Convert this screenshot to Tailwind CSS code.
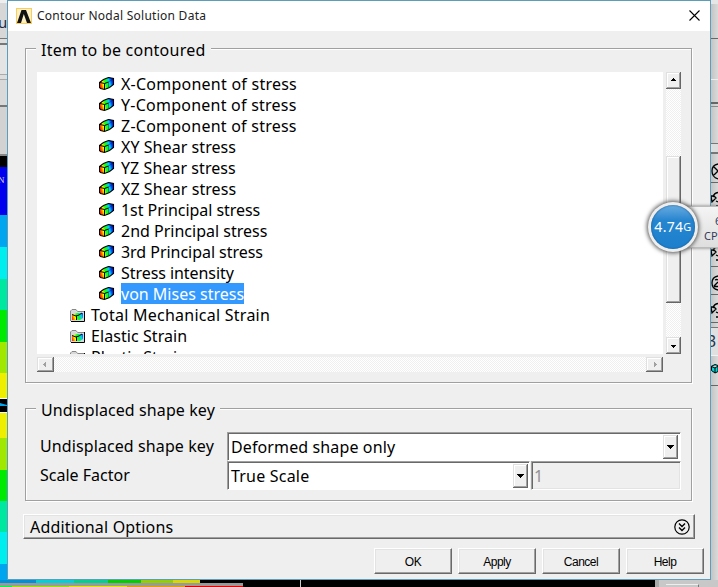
<!DOCTYPE html>
<html lang="en">
<head>
<meta charset="utf-8">
<title>Contour Nodal Solution Data</title>
<script src="https://cdn.jsdelivr.net/npm/@tailwindcss/browser@4"></script>
</head>
<body class="relative w-[718px] h-[587px] overflow-hidden bg-[#d6d6d6] font-['Noto_Sans','Open_Sans',sans-serif] text-[16px] text-black">
<svg width="0" height="0" class="absolute">
  <defs>
    <linearGradient id="rain" gradientUnits="userSpaceOnUse" x1="0" y1="9" x2="15" y2="4">
      <stop offset="0" stop-color="#f00"/><stop offset=".14" stop-color="#ff5000"/><stop offset=".3" stop-color="#ff0"/><stop offset=".42" stop-color="#3f0"/><stop offset=".58" stop-color="#00f060"/><stop offset=".7" stop-color="#0cf"/><stop offset=".84" stop-color="#04f"/><stop offset="1" stop-color="#00c"/>
    </linearGradient>
    <symbol id="cube" viewBox="0 0 16 14">
      <path d="M.5 5.500L4.500 2.500 9.500.5 14.500 1.500V7.500L10.500 10.500 5.500 12.500 1.500 11.500.5 10.500Z" fill="url(#rain)" stroke="#000" stroke-width="1.100"/>
      <path d="M1 5.500L5.500 6.500 9.500 5M5.500 6.500V12" fill="none" stroke="#000"/>
      <path d="M9.500 5L14 2M9.500 5V10" fill="none" stroke="#000" stroke-opacity=".35"/>
    </symbol>
    <symbol id="folder" viewBox="0 0 16 14">
      <path d="M1 13V3l1-1h4l1 2h8v9z" fill="#d8d8d8"/>
      <path d="M.5 13V3L2 1.500h4L7.500 3.500H14" fill="none" stroke="#888"/>
      <path d="M14.500 3v10.500H1" fill="none" stroke="#000"/>
      <path d="M2 7l5-2h6v5l-3 2H2z" fill="url(#rain)"/>
      <path d="M2 6.500l4 1.500 3-1 3-2M6.500 8v4" fill="none" stroke="#000"/>
    </symbol>
    <pattern id="dither" width="2" height="2" patternUnits="userSpaceOnUse"><rect width="2" height="2" fill="#fff"/><path d="M0 0h1v1H0zM1 1h1v1H1z" fill="#efefef"/></pattern>
    <symbol id="arc" viewBox="0 0 7 18"><path d="M7 2.500Q3 3 2 7M0 6h3l2 2-4 4zM5 11l2 1M5 16h2" fill="none" stroke="#000" stroke-width="1.300"/></symbol>
  </defs>
</svg>

<!-- application window behind the dialog -->
<div class="absolute left-0 top-0 w-[7px] h-[587px] flex flex-col overflow-hidden">
  <div class="h-[38px] shrink-0 bg-[#d7d7d7] border-t-[3px] border-[#eee] pt-[8px] text-[#1d2b45] text-[15px] leading-[22px]"><span class="-ml-[2px]">u</span></div>
  <div class="h-[7px] shrink-0 bg-[#dedede] border-t border-b-2 border-[#777]"></div>
  <div class="h-[30px] shrink-0 bg-[#e4e4e4] border-b border-[#aaa]"></div>
  <div class="h-[5px] shrink-0 bg-[#ddd] border-b border-[#aaa]"></div>
  <div class="h-[27px] shrink-0 bg-[#d9d9d9] border-b-2 border-[#777]"></div>
  <div class="h-[49px] shrink-0 bg-[#d2d2d2] border-b-2 border-[#888]"></div>
  <div class="h-[11px] shrink-0 bg-black"></div>
  <div class="h-[48px] shrink-0 bg-[#0000ee] text-[#ddd] font-['Liberation_Serif',serif] text-[9px] leading-[26px]"><span class="-ml-[2px]">N</span></div>
  <div class="h-[32px] shrink-0 bg-[#00a5f0]"></div>
  <div class="h-[32px] shrink-0 bg-[#00eeee]"></div>
  <div class="h-[31px] shrink-0 bg-[#00e8a0]"></div>
  <div class="h-[32px] shrink-0 bg-[#00ea00]"></div>
  <div class="h-[31px] shrink-0 bg-[#a0e800]"></div>
  <div class="h-[25px] shrink-0 bg-[#eeee00]"></div>
  <svg class="shrink-0" width="7" height="15"><rect width="7" height="15"/><path d="M0 .5h7M0 14.500h7" stroke="#fff"/><path d="M0 5l7 2v1H0z" fill="#00a5f0"/></svg>
  <div class="h-[25px] shrink-0 bg-[#eeee00]"></div>
  <div class="h-[32px] shrink-0 bg-[#a0e800]"></div>
  <div class="h-[31px] shrink-0 bg-[#00ea00]"></div>
  <div class="h-[31px] shrink-0 bg-[#00e8a0]"></div>
  <div class="h-[32px] shrink-0 bg-[#00eeee]"></div>
  <div class="h-[23px] shrink-0 bg-[#00a5f0]"></div>
</div>
<div class="absolute left-0 top-[580px] w-[718px] h-[7px] bg-black flex">
  <div class="w-[243px] flex flex-col">
    <div class="flex h-[3px] pr-[43px]"><div class="w-[36px] bg-[#0090d8]"></div><div class="w-[38px] bg-[#00d0d8]"></div><div class="w-[34px] bg-[#00d090]"></div><div class="w-[33px] bg-[#00d000]"></div><div class="w-[32px] bg-[#90d000]"></div><div class="w-[27px] bg-[#d8d800]"></div></div>
    <div class="h-[3px] bg-[#999]"></div>
    <div class="flex h-px"><div class="w-[12px] bg-[#00ff40]"></div><div class="w-[57px] bg-[#a0e800]"></div><div class="w-[58px] bg-[#e8e800]"></div><div class="w-[58px] bg-[#e8a000]"></div><div class="w-[58px] bg-[#e80000]"></div></div>
  </div>
  <div class="w-[57px]"></div><div class="w-px bg-[#ccc]"></div><div class="w-[354px]"></div>
  <div class="w-[63px] bg-[#c8c8c8] border-l-4 border-[#aaa] pl-[7px] pt-[4px]"><div class="w-[33px] h-[3px] border-t border-r border-t-[#eee] border-r-[#777]"></div></div>
</div>
<div class="absolute left-[711px] top-0 w-[7px] h-[580px] bg-linear-to-r from-[#c4c4c4] to-[#dadada] flex flex-col overflow-hidden">
  <div class="h-[39px] shrink-0 border-t-4 border-t-[#e6e6e6] border-b border-b-[#666]"></div>
  <div class="h-[41px] shrink-0 border-b border-[#eee]"></div>
  <div class="h-[24px] shrink-0 border-b-2 border-[#666]"></div>
  <div class="h-[3px] shrink-0 border-b border-[#888]"></div>
  <div class="h-[37px] shrink-0 border-b border-[#777]"></div>
  <div class="h-[10px] shrink-0 border-b-2 border-[#777] bg-[#ddd]"></div>
  <div class="h-[29px] shrink-0 border-b border-[#666] pt-[9px]"><svg width="7" height="18"><path d="M7 1Q1 2 1 8t6 8M3 4l4 4M3 12l4-4" fill="none" stroke="#000" stroke-width="1.300"/></svg></div>
  <div class="h-[28px] shrink-0 border-b border-[#666] pt-[7px]"><svg width="7" height="18"><use href="#arc"/></svg></div>
  <div class="h-[28px] shrink-0 border-b border-[#666]"></div>
  <div class="h-[28px] shrink-0 border-b border-[#666] pt-[5px]"><svg width="7" height="18"><use href="#arc"/></svg></div>
  <div class="h-[28px] shrink-0 border-b border-[#666] pt-[8px]"><svg width="7" height="18"><path d="M7 1Q1 2 1 8t6 7M4 5q2-1 3 0M3 11l4-4M3 11.500h4" fill="none" stroke="#000" stroke-width="1.300"/></svg></div>
  <div class="h-[28px] shrink-0 border-b border-[#666] pt-[6px]"><svg width="7" height="18"><use href="#arc"/></svg></div>
  <div class="h-[5px] shrink-0 border-b border-[#777]"></div>
  <div class="h-[28px] shrink-0 bg-[#e0e0e0] border-b border-[#f2f2f2] text-[16px] leading-[27px] text-[#26334d]"><span class="-ml-[4px]">3</span></div>
  <div class="h-[5px] shrink-0"></div>
  <div class="h-[25px] shrink-0 border-b border-[#666] pt-[3px] flex"><svg width="7" height="10"><path d="M0 2.500L4 .5l3 1M.5 2.500v4L4 9l3-1.500V2L4 4 .5 2.500z" fill="#00d8d8" stroke="#000"/><path d="M4 4v5" stroke="#000"/></svg></div>
</div>

<!-- dialog -->
<main class="absolute left-[7px] top-0 w-[704px] h-[580px] bg-[#efefef] border border-[#5c9db9] flex flex-col">
  <header class="h-[30px] bg-white flex items-center pl-[8px] pr-[10px]">
    <svg width="16" height="16"><rect width="16" height="16" fill="#f7cf5a"/><rect x="1" y="1" width="14" height="14" fill="#fff" opacity=".65"/><path d="M1 15L5.500 2h4.500L15 15h-4L7.800 6 5 15z" fill="#111"/></svg>
    <h1 class="ml-[5px] text-[12px] leading-[16px] tracking-[0.26px] whitespace-nowrap text-[#222] grow">Contour Nodal Solution Data</h1>
    <svg class="-mt-[2px]" width="11" height="11"><path d="M.5.5l10 10M10.500.5l-10 10" stroke="#000" stroke-width="1.100"/></svg>
  </header>

  <div class="flex flex-col pl-[15px] pr-[14px] pt-[7px]">
    <!-- contour item group -->
    <section class="ml-[2px] mr-[2px] h-[346px] relative">
      <div class="absolute left-0 top-[10px] w-[667px] h-[335px] border border-[#a0a0a0] shadow-[1px_1px_0_#fff,inset_1px_1px_0_#fff]"></div>
      <h2 class="relative w-fit h-[23px] ml-[11px] px-[5px] bg-[#efefef] leading-[25px] tracking-[0.24px] whitespace-nowrap">Item to be contoured</h2>
      <div class="relative flex gap-[3px] ml-[12px] mt-[11px]">
        <div class="w-[626px]">
          <ul class="h-[282px] bg-white overflow-hidden pt-px leading-[21px] whitespace-nowrap">
            <li class="h-[21px] pl-[62px] flex items-center gap-[6px]"><svg width="16" height="14"><use href="#cube"/></svg><span class="h-[21px] leading-[23px] tracking-[0.24px]">X-Component of stress</span></li>
            <li class="h-[21px] pl-[62px] flex items-center gap-[6px]"><svg width="16" height="14"><use href="#cube"/></svg><span class="h-[21px] leading-[23px] tracking-[0.24px]">Y-Component of stress</span></li>
            <li class="h-[21px] pl-[62px] flex items-center gap-[6px]"><svg width="16" height="14"><use href="#cube"/></svg><span class="h-[21px] leading-[23px] tracking-[0.24px]">Z-Component of stress</span></li>
            <li class="h-[21px] pl-[62px] flex items-center gap-[6px]"><svg width="16" height="14"><use href="#cube"/></svg><span class="h-[21px] leading-[23px] tracking-[0.06px]">XY Shear stress</span></li>
            <li class="h-[21px] pl-[62px] flex items-center gap-[6px]"><svg width="16" height="14"><use href="#cube"/></svg><span class="h-[21px] leading-[23px] tracking-[0.06px]">YZ Shear stress</span></li>
            <li class="h-[21px] pl-[62px] flex items-center gap-[6px]"><svg width="16" height="14"><use href="#cube"/></svg><span class="h-[21px] leading-[23px] tracking-[0.06px]">XZ Shear stress</span></li>
            <li class="h-[21px] pl-[62px] flex items-center gap-[6px]"><svg width="16" height="14"><use href="#cube"/></svg><span class="h-[21px] leading-[23px] tracking-[-0.04px]">1st Principal stress</span></li>
            <li class="h-[21px] pl-[62px] flex items-center gap-[6px]"><svg width="16" height="14"><use href="#cube"/></svg><span class="h-[21px] leading-[23px]">2nd Principal stress</span></li>
            <li class="h-[21px] pl-[62px] flex items-center gap-[6px]"><svg width="16" height="14"><use href="#cube"/></svg><span class="h-[21px] leading-[23px] tracking-[-0.04px]">3rd Principal stress</span></li>
            <li class="h-[21px] pl-[62px] flex items-center gap-[6px]"><svg width="16" height="14"><use href="#cube"/></svg><span class="h-[21px] leading-[23px] tracking-[-0.06px]">Stress intensity</span></li>
            <li class="h-[21px] pl-[62px] flex items-center gap-[6px]"><svg width="16" height="14"><use href="#cube"/></svg><span class="h-[21px] leading-[23px] bg-[#3399ff] text-white">von Mises stress</span></li>
            <li class="h-[21px] pl-[33px] flex items-center gap-[5px]"><svg width="16" height="14"><use href="#folder"/></svg><span class="h-[21px] leading-[23px] tracking-[0.25px]">Total Mechanical Strain</span></li>
            <li class="h-[21px] pl-[33px] flex items-center gap-[5px]"><svg width="16" height="14"><use href="#folder"/></svg><span class="h-[21px] leading-[23px] tracking-[0.07px]">Elastic Strain</span></li>
            <li class="h-[21px] pl-[33px] flex items-center gap-[5px]"><svg width="16" height="14"><use href="#folder"/></svg><span class="h-[21px] leading-[23px]">Plastic Strain</span></li>
          </ul>
          <svg class="mt-[3px]" width="626" height="15" shape-rendering="crispEdges"><rect width="626" height="15" fill="url(#dither)"/>
            <g id="hb"><rect width="17" height="15" fill="#666"/><rect width="16" height="14" fill="#e0e0e0"/><rect x="1" y="1" width="15" height="13" fill="#a0a0a0"/><rect x="1" y="1" width="14" height="12" fill="#fff"/><rect x="2" y="2" width="13" height="11" fill="#efefef"/></g>
            <use href="#hb" x="609"/>
            <path d="M6 7h1V6h1V5h1v5H8V9H7V8H6zM617 5h1v1h1v1h1v1h-1v1h-1v1h-1z" fill="#a0a0a0"/>
          </svg>
        </div>
        <svg width="15" height="282" shape-rendering="crispEdges"><rect width="15" height="282" fill="url(#dither)"/>
          <g id="vb"><rect width="15" height="17" fill="#666"/><rect width="14" height="16" fill="#e0e0e0"/><rect x="1" y="1" width="13" height="15" fill="#a0a0a0"/><rect x="1" y="1" width="12" height="14" fill="#fff"/><rect x="2" y="2" width="11" height="13" fill="#efefef"/></g>
          <use href="#vb" y="265"/>
          <rect y="84" width="15" height="147" fill="#666"/><rect y="84" width="14" height="146" fill="#e0e0e0"/><rect x="1" y="85" width="13" height="145" fill="#a0a0a0"/><rect x="1" y="85" width="12" height="144" fill="#fff"/><rect x="2" y="86" width="11" height="143" fill="#efefef"/>
          <path d="M7 6h1v1h1v1h1v1H5V8h1V7h1zM5 273h5v1H9v1H8v1H7v-1H6v-1H5z"/>
        </svg>
      </div>
    </section>

    <!-- shape key group -->
    <section class="ml-[2px] mt-[14px] w-[667px] h-[103px] relative">
      <div class="absolute left-0 top-[10px] w-[667px] h-[93px] border border-[#a0a0a0] shadow-[1px_1px_0_#fff,inset_1px_1px_0_#fff]"></div>
      <h2 class="relative w-fit h-[23px] ml-[11px] px-[5px] bg-[#efefef] leading-[25px] tracking-[0.1px] whitespace-nowrap">Undisplaced shape key</h2>
      <div class="relative ml-[15px] mt-[11px] grid grid-cols-[187px_454px] whitespace-nowrap">
        <label class="leading-[29px] tracking-[0.1px]">Undisplaced shape key</label>
        <div class="h-[29px] bg-white border border-t-[#a0a0a0] border-l-[#a0a0a0] border-[#fff] shadow-[inset_1px_1px_0_#696969] flex items-center pl-[3px] pr-[2px]">
          <span class="grow leading-[27px] pt-[2px] tracking-[0.12px]">Deformed shape only</span>
          <svg width="15" height="24" shape-rendering="crispEdges"><rect width="15" height="24" fill="#666"/><rect width="14" height="23" fill="#e0e0e0"/><rect x="1" y="1" width="13" height="22" fill="#a0a0a0"/><rect x="1" y="1" width="12" height="21" fill="#fff"/><rect x="2" y="2" width="11" height="20" fill="#efefef"/><path d="M4 10h7v1h-1v1H9v1H8v1H7v-1H6v-1H5v-1H4z"/></svg>
        </div>
        <label class="leading-[29px]">Scale Factor</label>
        <div class="flex gap-px">
          <div class="w-[303px] h-[29px] bg-white border border-t-[#a0a0a0] border-l-[#a0a0a0] border-[#fff] shadow-[inset_1px_1px_0_#696969] flex items-center pl-[3px] pr-px">
            <span class="grow leading-[27px] pt-[2px] tracking-[0.2px]">True Scale</span>
            <svg width="15" height="24" shape-rendering="crispEdges"><rect width="15" height="24" fill="#666"/><rect width="14" height="23" fill="#e0e0e0"/><rect x="1" y="1" width="13" height="22" fill="#a0a0a0"/><rect x="1" y="1" width="12" height="21" fill="#fff"/><rect x="2" y="2" width="11" height="20" fill="#efefef"/><path d="M4 10h7v1h-1v1H9v1H8v1H7v-1H6v-1H5v-1H4z"/></svg>
          </div>
          <div class="grow h-[29px] border border-t-[#a0a0a0] border-l-[#a0a0a0] border-[#fff] shadow-[inset_1px_1px_0_#696969,inset_-1px_-1px_0_#e3e3e3] pl-[2px] pt-px leading-[27px] text-[#929292]">1</div>
        </div>
      </div>
    </section>

    <div class="mt-[13px] w-[672px] h-[25px] border border-[#696969] border-t-white border-l-white shadow-[inset_-1px_-1px_0_#a0a0a0,inset_1px_1px_0_#e3e3e3] flex items-center justify-between pl-[6px] pr-[4px] whitespace-nowrap">
      <span class="leading-[23px] pt-px tracking-[0.17px]">Additional Options</span>
      <svg width="16" height="16"><circle cx="8" cy="8" r="7.200" fill="none" stroke="#000" stroke-width="1.200"/><path d="M5 4.500l3 3 3-3M5 8.500l3 3 3-3" fill="none" stroke="#000" stroke-width="1.400"/></svg>
    </div>

    <div class="mt-[9px] mr-[-8px] flex justify-end gap-[6px] font-['Liberation_Sans',Arial,sans-serif] text-[12px] tracking-[-0.5px]">
      <button class="w-[78px] h-[26px] pt-px border border-[#696969] border-t-white border-l-white shadow-[inset_-1px_-1px_0_#a0a0a0,inset_1px_1px_0_#e3e3e3]">OK</button>
      <button class="w-[78px] h-[26px] pt-px border border-[#696969] border-t-white border-l-white shadow-[inset_-1px_-1px_0_#a0a0a0,inset_1px_1px_0_#e3e3e3]">Apply</button>
      <button class="w-[78px] h-[26px] pt-px border border-[#696969] border-t-white border-l-white shadow-[inset_-1px_-1px_0_#a0a0a0,inset_1px_1px_0_#e3e3e3]">Cancel</button>
      <button class="w-[78px] h-[26px] pt-px border border-[#696969] border-t-white border-l-white shadow-[inset_-1px_-1px_0_#a0a0a0,inset_1px_1px_0_#e3e3e3]">Help</button>
    </div>
  </div>
</main>

<!-- floating system monitor -->
<div class="absolute left-[674px] top-[206px] w-[50px] h-[42px] bg-linear-to-b from-[#f4f4f4] to-[#dedede] border-y border-[#bbb] shadow-[0_0_3px_#777] pl-[30px] pt-[6px] text-[11px] leading-[15px] whitespace-nowrap text-[#35395c]">
  <div class="pl-[11px]">6%</div><div>CPU</div>
</div>
<div class="absolute left-[648px] top-[202px] w-[50px] h-[50px] rounded-full bg-[#eee] shadow-[0_0_4px_1px_#555] p-[3px]">
  <div class="w-[44px] h-[44px] rounded-full bg-linear-to-b from-[#67ace0] via-[#2585cf] via-35% to-[#1d80cd] shadow-[inset_0_0_2px_#154f88] flex items-center justify-center text-white text-[14px] tracking-[0.3px] whitespace-nowrap pb-[2px]">4.74<span class="text-[11px] pt-[2px]">G</span></div>
</div>
</body>
</html>
